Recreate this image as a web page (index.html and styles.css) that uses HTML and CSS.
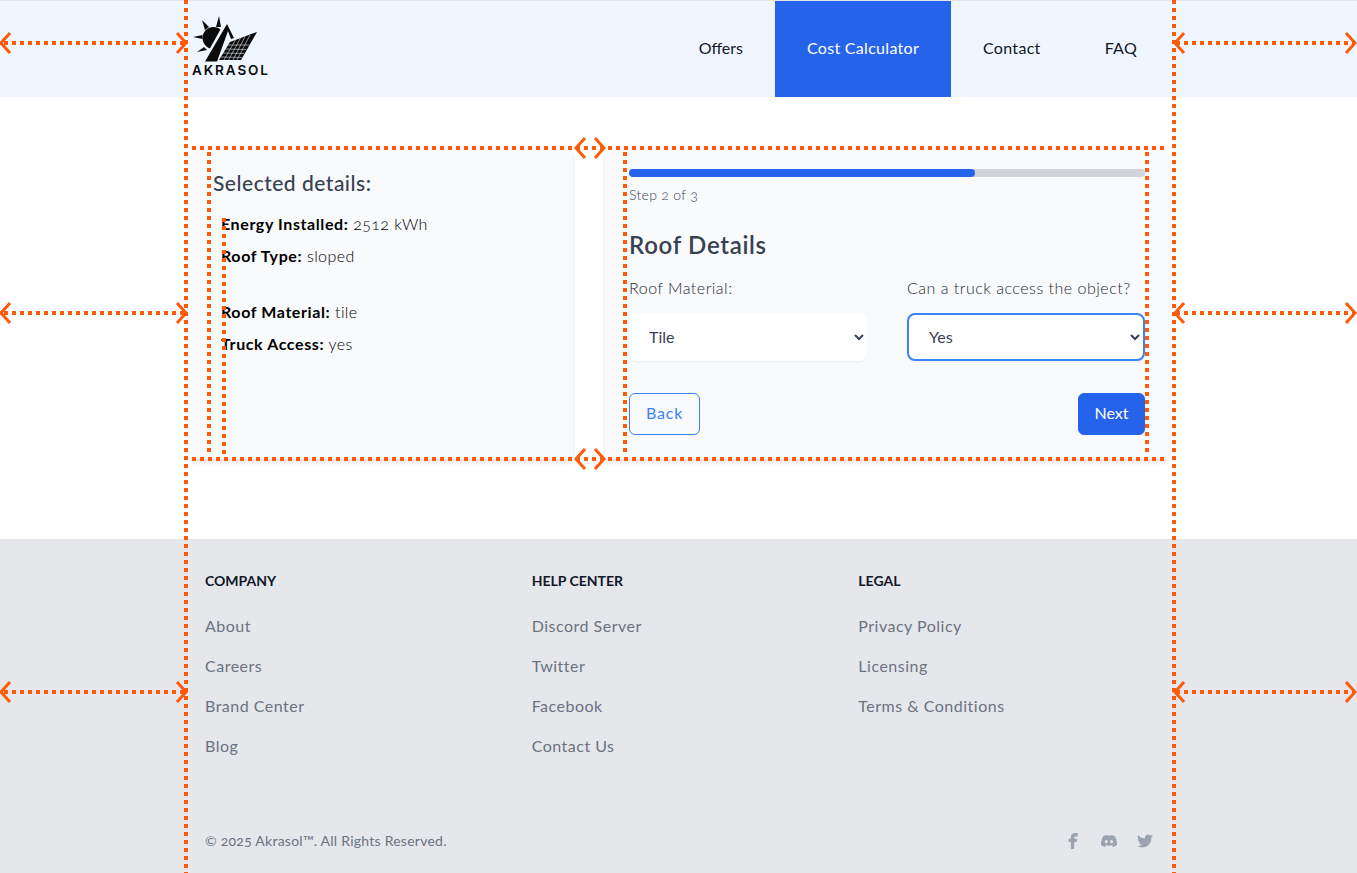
FILE: index.html
```html
<!DOCTYPE html>
<html lang="en">
<head>
    <meta charset="UTF-8">
    <meta name="viewport" content="width=device-width, initial-scale=1.0">
    <title>Akrasol - Cost Calculator</title>
    <link rel="stylesheet" href="styles.css">
</head>
<body>

<header class="topbar">
    <div class="topbar-inner">
        <a class="logo" href="#">
            <svg class="logo-mark" width="70" height="48" viewBox="0 0 70 48">
                <circle cx="21.500" cy="24" r="11" fill="#0b0b0b"/>
                <polygon points="32,9 36,9 16,47 11,47" fill="#eff6ff"/>
                <polygon points="27,2 24,13 29,13" fill="#0b0b0b"/>
                <polygon points="10,6 13,16 17,13" fill="#0b0b0b"/>
                <polygon points="1,23 10.500,21 10.500,25" fill="#0b0b0b"/>
                <polygon points="5,38 12,33 15,36" fill="#0b0b0b"/>
                <polygon points="35,10 42,24 39,25 36,17 25,47.500 13,47.500" fill="#0b0b0b"/>
                <polygon points="65,18 49,46 27,46 38,28" fill="#0b0b0b"/>
                <g stroke="#dfe7f0" stroke-width="0.6" fill="none">
                    <line x1="36" y1="31" x2="57" y2="31"/>
                    <line x1="33.500" y1="35" x2="54" y2="35.500"/>
                    <line x1="31" y1="39" x2="52" y2="39.500"/>
                    <line x1="29" y1="43" x2="50" y2="43.500"/>
                    <line x1="44" y1="25" x2="32" y2="46"/>
                    <line x1="48.500" y1="24" x2="36.500" y2="46"/>
                    <line x1="53" y1="22.500" x2="41" y2="46"/>
                    <line x1="58" y1="21" x2="45" y2="46"/>
                </g>
            </svg>
            <span class="logo-text">AKRASOL</span>
        </a>
        <nav class="nav">
            <a class="nav-offers" href="#">Offers</a>
            <a class="active" href="#">Cost Calculator</a>
            <a href="#">Contact</a>
            <a href="#">FAQ</a>
        </nav>
    </div>
</header>

<main class="content">
    <aside class="card summary">
        <h3>Selected details:</h3>
        <ul>
            <li><strong>Energy Installed:</strong> 2512 kWh</li>
            <li><strong>Roof Type:</strong> sloped</li>
            <li class="spacer"></li>
            <li><strong>Roof Material:</strong> tile</li>
            <li><strong>Truck Access:</strong> yes</li>
        </ul>
    </aside>

    <section class="card wizard">
        <div class="progress"><div class="progress-fill"></div></div>
        <p class="step">Step 2 of 3</p>
        <h2>Roof Details</h2>
        <form>
            <div class="fields">
                <label>
                    <span>Roof Material:</span>
                    <select>
                        <option>Tile</option>
                        <option>Metal</option>
                    </select>
                </label>
                <label>
                    <span>Can a truck access the object?</span>
                    <select class="focused">
                        <option>Yes</option>
                        <option>No</option>
                    </select>
                </label>
            </div>
            <div class="actions">
                <button class="btn-back" type="button">Back</button>
                <button class="btn-next" type="button">Next</button>
            </div>
        </form>
    </section>
</main>

<footer class="footer">
    <div class="footer-inner">
        <div class="footer-cols">
            <div>
                <h4>Company</h4>
                <a href="#">About</a>
                <a href="#">Careers</a>
                <a href="#">Brand Center</a>
                <a href="#">Blog</a>
            </div>
            <div>
                <h4>Help center</h4>
                <a href="#">Discord Server</a>
                <a href="#">Twitter</a>
                <a href="#">Facebook</a>
                <a href="#">Contact Us</a>
            </div>
            <div>
                <h4>Legal</h4>
                <a href="#">Privacy Policy</a>
                <a href="#">Licensing</a>
                <a href="#">Terms &amp; Conditions</a>
            </div>
        </div>
        <div class="footer-bottom">
            <span class="copyright">© 2025 Akrasol™. All Rights Reserved.</span>
            <div class="social">
                <svg width="16" height="16" viewBox="1.800 3.600 20.400 20.400"><path d="M14.500 8H18V3.600h-3.500C11.400 3.600 9.300 5.800 9.300 8.800V11H6.500v4h2.800v9h4.200v-9h3.300l.7-4h-4V9c0-.6.4-1 1-1z"/></svg>
                <svg width="16" height="16" viewBox="0 0 24 24"><path d="M20.317 4.3698a19.7913 19.7913 0 00-4.8851-1.5152.0741.0741 0 00-.0785.0371c-.211.3753-.4447.8648-.6083 1.2495-1.8447-.2762-3.68-.2762-5.4868 0-.1636-.3933-.4058-.8742-.6177-1.2495a.077.077 0 00-.0785-.037 19.7363 19.7363 0 00-4.8852 1.515.0699.0699 0 00-.0321.0277C.5334 9.0458-.319 13.5799.0992 18.0578a.0824.0824 0 00.0312.0561c2.0528 1.5076 4.0413 2.4228 5.9929 3.0294a.0777.0777 0 00.0842-.0276c.4616-.6304.8731-1.2952 1.226-1.9942a.076.076 0 00-.0416-.1057c-.6528-.2476-1.2743-.5495-1.8722-.8923a.077.077 0 01-.0076-.1277c.1258-.0943.2517-.1923.3718-.2914a.0743.0743 0 01.0776-.0105c3.9278 1.7933 8.18 1.7933 12.0614 0a.0739.0739 0 01.0785.0095c.1202.099.246.1981.3728.2924a.077.077 0 01-.0066.1276 12.2986 12.2986 0 01-1.873.8914.0766.0766 0 00-.0407.1067c.3604.698.7719 1.3628 1.225 1.9932a.076.076 0 00.0842.0286c1.961-.6067 3.9495-1.5219 6.0023-3.0294a.077.077 0 00.0313-.0552c.5004-5.177-.8382-9.6739-3.5485-13.6604a.061.061 0 00-.0312-.0286zM8.02 15.3312c-1.1825 0-2.1569-1.0857-2.1569-2.419 0-1.3332.9555-2.4189 2.157-2.4189 1.2108 0 2.1757 1.0952 2.1568 2.419 0 1.3332-.9555 2.4189-2.1569 2.4189zm7.9748 0c-1.1825 0-2.1569-1.0857-2.1569-2.419 0-1.3332.9554-2.4189 2.1569-2.4189 1.2108 0 2.1757 1.0952 2.1568 2.419 0 1.3332-.946 2.4189-2.1568 2.4189Z"/></svg>
                <svg width="16" height="16" viewBox="0 0 24 24"><path d="M23.953 4.57a10 10 0 01-2.825.775 4.958 4.958 0 002.163-2.723c-.951.555-2.005.959-3.127 1.184a4.92 4.92 0 00-8.384 4.482C7.69 8.095 4.067 6.13 1.64 3.162a4.822 4.822 0 00-.666 2.475c0 1.71.87 3.213 2.188 4.096a4.904 4.904 0 01-2.228-.616v.06a4.923 4.923 0 003.946 4.827 4.996 4.996 0 01-2.212.085 4.936 4.936 0 004.604 3.417 9.867 9.867 0 01-6.102 2.105c-.39 0-.779-.023-1.17-.067a13.995 13.995 0 007.557 2.209c9.053 0 13.998-7.496 13.998-13.985 0-.21 0-.42-.015-.63A9.935 9.935 0 0024 4.59z"/></svg>
            </div>
        </div>
    </div>
</footer>

<!-- spacing guides drawn over the page -->
<svg class="guides" width="1357" height="873" viewBox="0 0 1357 873">
    <g class="dots">
        <line x1="186" y1="0" x2="186" y2="873"/>
        <line x1="1174" y1="0" x2="1174" y2="873"/>
        <line x1="192" y1="148" x2="1167" y2="148"/>
        <line x1="192" y1="459" x2="1167" y2="459"/>
        <line x1="209" y1="152" x2="209" y2="456"/>
        <line x1="224" y1="218" x2="224" y2="456"/>
        <line x1="625" y1="152" x2="625" y2="456"/>
        <line x1="1147" y1="152" x2="1147" y2="456"/>
        <line x1="4" y1="43" x2="184" y2="43"/>
        <line x1="4" y1="313" x2="184" y2="313"/>
        <line x1="4" y1="692" x2="184" y2="692"/>
        <line x1="1176" y1="43" x2="1353" y2="43"/>
        <line x1="1176" y1="313" x2="1353" y2="313"/>
        <line x1="1176" y1="692" x2="1353" y2="692"/>
    </g>
    <g class="heads">
        <path d="M10 33 1 43l9 10M177 33l9 10-9 10"/>
        <path d="M10 303 1 313l9 10M177 303l9 10-9 10"/>
        <path d="M10 682 1 692l9 10M177 682l9 10-9 10"/>
        <path d="M1184 33l-9 10 9 10M1346 33l9 10-9 10"/>
        <path d="M1184 303l-9 10 9 10M1346 303l9 10-9 10"/>
        <path d="M1184 682l-9 10 9 10M1346 682l9 10-9 10"/>
        <path d="M585 138l-9 10 9 10M595 138l9 10-9 10"/>
        <path d="M585 449l-9 10 9 10M595 449l9 10-9 10"/>
    </g>
</svg>

</body>
</html>
```

FILE: styles.css
```css
* {
    box-sizing: border-box;
}

body {
    margin: 0;
    position: relative;
    font-family: "Lato", "Open Sans", sans-serif;
    font-size: 16px;
    line-height: 24px;
    font-variant-numeric: oldstyle-nums;
    color: #111827;
    background-color: #fff;
    overflow: hidden;
    height: 873px;
}

a {
    color: inherit;
    text-decoration: none;
}

/* header */
.topbar {
    height: 97px;
    background-color: #eff6ff;
    border-top: 1px solid #e5e7eb;
}

.topbar-inner {
    width: 980px;
    height: 96px;
    margin: 0 188px 0 189px;
    display: flex;
    justify-content: space-between;
}

.logo {
    display: flex;
    flex-direction: column;
    margin: 13px 0 0 3px;
}

.logo-mark {
    display: block;
}

.logo-text {
    margin-top: 1px;
    font-family: "Inter", sans-serif;
    font-size: 13.5px;
    font-weight: 600;
    line-height: 14px;
    letter-spacing: 1.9px;
    color: #0b0b0b;
}

.nav {
    display: flex;
}

.nav a {
    display: flex;
    align-items: center;
    padding: 0 32px 2px;
    letter-spacing: 0.3px;
}

.nav a.nav-offers {
    letter-spacing: 0;
}

.nav a.active {
    background-color: #2563eb;
    color: #fff;
}

/* main cards */
.content {
    width: 980px;
    margin: 51px 188px 0 189px;
    display: flex;
    gap: 32px;
}

.card {
    height: 311px;
    padding: 21px 24px 24px;
    background-color: #f9fafb;
    box-shadow: 0 4px 6px -1px rgba(0,0,0,0.1), 0 2px 4px -2px rgba(0,0,0,0.1);
}

.summary {
    width: 384px;
}

.wizard {
    width: 564px;
}

.summary h3 {
    margin: 0 0 15px;
    font-size: 21px;
    line-height: 28px;
    font-weight: 500;
    color: #374151;
    letter-spacing: 0.5px;
}

.summary ul {
    margin: 0;
    padding: 0 0 0 8px;
    list-style: none;
}

.summary li {
    margin-bottom: 8px;
    font-weight: 300;
    color: #000;
    letter-spacing: 0.4px;
}

.summary li.spacer {
    height: 16px;
}

.summary strong {
    font-weight: 700;
    letter-spacing: 0.6px;
}

.progress {
    height: 8px;
    border-radius: 4px;
    background-color: #d1d5db;
}

.progress-fill {
    height: 8px;
    width: 67%;
    border-radius: 4px;
    background-color: #2563eb;
}

.step {
    margin: 8px 0 0;
    font-size: 14px;
    line-height: 20px;
    font-weight: 300;
    color: #374151;
    letter-spacing: 0.3px;
}

.wizard h2 {
    margin: 24px 0 0;
    font-size: 24px;
    line-height: 32px;
    font-weight: 600;
    color: #374151;
    letter-spacing: 0.7px;
}

.fields {
    display: grid;
    grid-template-columns: 1fr 1fr;
    gap: 40px;
    margin-top: 15px;
}

.fields span {
    display: block;
    font-weight: 300;
    color: #1f2937;
    letter-spacing: 0.5px;
}

.fields select {
    display: block;
    width: 100%;
    height: 48px;
    margin-top: 13px;
    padding: 0 0 2px 16px;
    font-family: inherit;
    font-size: 16px;
    color: #374151;
    background-color: #fff;
    border: none;
    border-radius: 8px;
    box-shadow: 0 1px 2px rgba(0,0,0,0.05);
    outline: none;
}

.fields select.focused {
    border: 2px solid #3b82f6;
}

.actions {
    display: flex;
    justify-content: space-between;
    margin-top: 32px;
}

.actions button {
    height: 42px;
    padding: 0 16px 4px;
    font-family: inherit;
    font-size: 16px;
    border-radius: 6px;
    cursor: pointer;
}

.btn-back {
    color: #3b82f6;
    background-color: transparent;
    border: 1px solid #3b82f6;
    letter-spacing: 0.8px;
}

.actions .btn-next {
    padding: 0 15.5px 4px;
    color: #fff;
    background-color: #2563eb;
    border: 1px solid #2563eb;
}

/* footer */
.footer {
    margin-top: 80px;
    height: 334px;
    background-color: #e5e7eb;
}

.footer-inner {
    width: 980px;
    margin: 0 188px 0 189px;
    padding: 32px 16px 0;
}

.footer-cols {
    display: grid;
    grid-template-columns: repeat(3, 1fr);
    gap: 32px;
    height: 227px;
}

.footer-cols h4 {
    margin: 0 0 23px;
    font-size: 14px;
    line-height: 20px;
    font-weight: 700;
    text-transform: uppercase;
    color: #111827;
}

.footer-cols a {
    display: block;
    margin-bottom: 16px;
    color: #6b7280;
    letter-spacing: 0.5px;
}

.footer-bottom {
    display: flex;
    justify-content: space-between;
    align-items: center;
    margin-top: 33px;
}

.copyright {
    font-size: 14px;
    line-height: 20px;
    color: #6b7280;
    letter-spacing: 0.25px;
}

.social {
    display: flex;
    gap: 20px;
}

.social svg {
    fill: #9ca3af;
    display: block;
}

/* guides overlay */
.guides {
    position: absolute;
    top: 0;
    left: 0;
    pointer-events: none;
}

.dots line {
    stroke: #ff5a0a;
    stroke-width: 4;
    stroke-dasharray: 4 4;
}

.heads path {
    fill: none;
    stroke: #ff5a0a;
    stroke-width: 3;
}
```
